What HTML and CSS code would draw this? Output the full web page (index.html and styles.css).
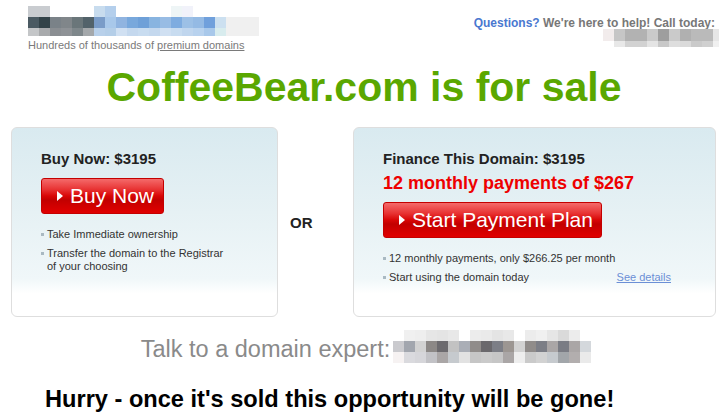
FILE: index.html
```html
<!DOCTYPE html>
<html>
<head>
<meta charset="utf-8">
<title>CoffeeBear.com is for sale</title>
<link rel="stylesheet" href="styles.css">
</head>
<body>
<header class="header">
  <div class="brand">
    <div class="logo"><div class="lr lr1"></div><div class="lr lr2"></div><div class="lr lr3"></div></div>
    <div class="tagline">Hundreds of thousands of <a href="#">premium domains</a></div>
  </div>
  <div class="contact">
    <div class="questions"><span class="q">Questions?</span> We're here to help! Call today:</div>
    <div class="phone-sm"><div class="ps1"></div><div class="ps2"></div></div>
  </div>
</header>

<h1 class="title">CoffeeBear.com is for sale</h1>

<section class="offers">
  <div class="card card-buy">
    <div class="card-title">Buy Now: $3195</div>
    <a class="btn btn-buy" href="#"><svg class="tri" width="6" height="10" viewBox="0 0 6 10"><path d="M0 0 L6 5 L0 10 Z" fill="#fff"/></svg><span>Buy Now</span></a>
    <ul class="points">
      <li>Take Immediate ownership</li>
      <li>Transfer the domain to the Registrar of your choosing</li>
    </ul>
  </div>
  <div class="or">OR</div>
  <div class="card card-fin">
    <div class="card-title">Finance This Domain: $3195</div>
    <div class="monthly">12 monthly payments of $267</div>
    <a class="btn btn-plan" href="#"><svg class="tri" width="6" height="10" viewBox="0 0 6 10"><path d="M0 0 L6 5 L0 10 Z" fill="#fff"/></svg><span>Start Payment Plan</span></a>
    <ul class="points">
      <li>12 monthly payments, only $266.25 per month</li>
      <li class="split"><span>Start using the domain today</span><a href="#" class="details">See details</a></li>
    </ul>
  </div>
</section>

<div class="talk">
  <span class="talk-text">Talk to a domain expert:</span>
  <div class="phone-lg"><div class="pl1"></div><div class="pl2"></div><div class="pl3"></div></div>
</div>

<p class="hurry">Hurry - once it's sold this opportunity will be gone!</p>
</body>
</html>
```

FILE: styles.css
```css
html, body {
  margin: 0;
  padding: 0;
  background: #fff;
}
body {
  font-family: "Liberation Sans", Arial, sans-serif;
  color: #222;
  width: 728px;
  height: 419px;
  overflow: hidden;
}

/* header */
.header {
  display: flex;
  justify-content: space-between;
  box-sizing: border-box;
  height: 58px;
  padding: 6px 9px 0 28px;
}
.logo { width: 231px; }
.lr { width: 231px; }
.lr1 {
  height: 11px;
  background: linear-gradient(to right,
    #c9ccd0 0 22px, #fff 22px 66px, #c8dcee 66px 77px, #b4cfec 77px 88px,
    #fff 88px 143px, #eef5f6 143px 154px, #f1f2fa 154px 165px, #fff 165px);
}
.lr2 {
  height: 11px;
  background: linear-gradient(to right,
    #4a5a62 0 11px, #324248 11px 22px, #7a8288 22px 33px, #80868a 33px 44px,
    #6a767a 44px 55px, #52626a 55px 66px, #7a9cc8 66px 77px, #a8c8ea 77px 88px,
    #90b4e0 88px 99px, #78a8dc 99px 110px, #6ea0d8 110px 121px, #88b4e0 121px 132px,
    #98bce4 132px 143px, #7eace0 143px 154px, #9cc0e6 154px 165px, #94bae4 165px 176px,
    #70a0dc 176px 187px, #cce0f0 187px 198px, #f0f0f0 198px);
}
.lr3 {
  height: 8px;
  background: linear-gradient(to right,
    #c4c6c8 0 11px, #a8aaac 11px 22px, #8a8e92 22px 33px, #8e9296 33px 44px,
    #7e878b 44px 55px, #a4a8ab 55px 66px, #b8d0ea 66px 77px, #b4cee8 77px 88px,
    #d0e0f2 88px 99px, #c4d8ee 99px 110px, #c8dcf0 110px 121px, #c4d8ee 121px 132px,
    #d0e0f2 132px 143px, #c8dcf0 143px 154px, #c0d6ee 154px 165px, #b8d2ee 165px 176px,
    #a8c8ea 176px 187px, #d8ecee 187px 198px, #f0f0f0 198px);
}
.tagline {
  margin-top: 3px;
  font-size: 11px;
  line-height: 13px;
  color: #7a7a7a;
}
.tagline a { color: #7a7a7a; text-decoration: underline; }

.contact {
  display: flex;
  flex-direction: column;
  align-items: flex-end;
  padding-top: 10px;
}
.questions {
  font-size: 12px;
  line-height: 14px;
  font-weight: bold;
  color: #777;
  margin-right: 4px;
}
.questions .q { color: #4a78d0; }
.phone-sm { width: 116px; margin-top: -1px; }
.ps1 {
  height: 12px;
  background: linear-gradient(to right,
    #f2ecec 0 11px, #c6c6c6 11px 22px, #b2b2b2 22px 44px, #cacaca 44px 55px,
    #9e9e9e 55px 66px, #cacaca 66px 77px, #b0b0b0 77px 88px, #bababa 88px 110px,
    #e6e6e6 110px);
}
.ps2 {
  height: 6px;
  background: linear-gradient(to right,
    #fff 0 11px, #e8e8e8 11px 22px, #d2d2d2 22px 44px, #e4e4e4 44px 55px,
    #c8c8c8 55px 66px, #dedede 66px 77px, #dadada 77px 88px, #cacaca 88px 99px,
    #d0d0d0 99px 110px, #f0f0f0 110px);
}

/* title */
.title {
  margin: 6px 0 0;
  text-align: center;
  font-size: 41px;
  line-height: 47px;
  font-weight: bold;
  color: #5aa700;
}

/* offers */
.offers {
  display: grid;
  grid-template-columns: 267px 75px 363px;
  margin-top: 16px;
  padding-left: 11px;
}
.card {
  box-sizing: border-box;
  height: 190px;
  border: 1px solid #dedede;
  border-radius: 6px;
  padding: 22px 0 0 29px;
  background: linear-gradient(#d9eaf0 0%, #e6f1f4 45%, #f0f7f9 80%, #fff 88%, #fff 100%);
}
.card-title {
  font-size: 15px;
  line-height: 17px;
  font-weight: bold;
  color: #222;
}
.or {
  align-self: center;
  padding-left: 12px;
  font-size: 15px;
  font-weight: bold;
  color: #222;
}
.monthly {
  margin-top: 6px;
  font-size: 18px;
  line-height: 21px;
  font-weight: bold;
  color: #ee0000;
}
.btn {
  display: flex;
  align-items: center;
  box-sizing: border-box;
  height: 36px;
  padding-left: 15px;
  border: 1px solid #c40000;
  border-radius: 3px;
  background: linear-gradient(#f46a6a 0%, #e83434 30%, #d80606 50%, #c20000 62%, #d30000 82%, #e00000 100%);
  color: #fff;
  text-decoration: none;
  font-size: 21px;
  line-height: 24px;
}
.btn .tri { margin-right: 7px; flex: none; }
.btn-buy { width: 123px; margin-top: 11px; }
.btn-plan { width: 219px; margin-top: 8px; }

.points {
  list-style: none;
  margin: 14px 0 0;
  padding: 0;
}
.points li {
  position: relative;
  padding-left: 6px;
  font-size: 11px;
  line-height: 13px;
  color: #333;
}
.points li + li { margin-top: 6px; }
.points li::before {
  content: "";
  position: absolute;
  left: 0;
  top: 5px;
  width: 3px;
  height: 3px;
  background: #a9b9c2;
}
.card-buy .points { width: 192px; }
.card-fin .points { width: 288px; }
.points li.split {
  display: flex;
  justify-content: space-between;
}
.details { color: #6b8fd6; text-decoration: underline; }

/* talk */
.talk {
  display: flex;
  justify-content: center;
  align-items: flex-end;
  margin-top: 13px;
  padding-left: 4px;
}
.talk-text {
  font-size: 23.5px;
  line-height: 27px;
  color: #8a8a8a;
}
.phone-lg { width: 198px; margin-left: 3px; }
.pl1, .pl2, .pl3 { height: 11px; }
.pl1 {
  background: linear-gradient(to right,
    #fff 0 11px, #f0f0f0 11px 22px, #eeeeee 22px 33px, #e6e6e6 33px 44px,
    #e4e4e4 44px 55px, #e8e8e8 55px 66px, #fff 66px 77px, #ececec 77px 88px,
    #eaeaea 88px 99px, #e4e4e4 99px 110px, #e8e8e8 110px 121px, #fff 121px 132px,
    #ececec 132px 143px, #f0f0f0 143px 154px, #e6e6e6 154px 165px, #dadada 165px 176px,
    #ececec 176px 187px, #fff 187px);
}
.pl2 {
  background: linear-gradient(to right,
    #cacace 0 11px, #a2a6ae 11px 22px, #d2d2d2 22px 33px, #8c8886 33px 44px,
    #6c6a6e 44px 55px, #c2c2c2 55px 66px, #aaaeb6 66px 77px, #908c8a 77px 88px,
    #6a686c 88px 99px, #7c7e86 99px 110px, #9c9692 110px 121px, #d2d2d2 121px 132px,
    #908c8a 132px 143px, #7c7e86 143px 154px, #aaa6a6 154px 165px, #7a7c84 165px 176px,
    #aaa6a6 176px 187px, #d4d8dc 187px);
}
.pl3 {
  background: linear-gradient(to right,
    #f6f2f2 0 11px, #dadade 11px 22px, #d6d6da 22px 33px, #c2c2c6 33px 44px,
    #aaa6a6 44px 55px, #c6cace 55px 66px, #e2e2e2 66px 77px, #c6c6c6 77px 88px,
    #cacaca 88px 99px, #c6c6c6 99px 110px, #aaa6a6 110px 121px, #eeeeee 121px 132px,
    #cacaca 132px 143px, #d2d2d2 143px 154px, #c6cace 154px 165px, #a2a6aa 165px 176px,
    #b2aeae 176px 187px, #eaeaea 187px);
}

/* hurry */
.hurry {
  margin: 23px 0 0;
  padding-left: 45px;
  font-size: 23.6px;
  line-height: 27px;
  font-weight: bold;
  color: #000;
}
```
